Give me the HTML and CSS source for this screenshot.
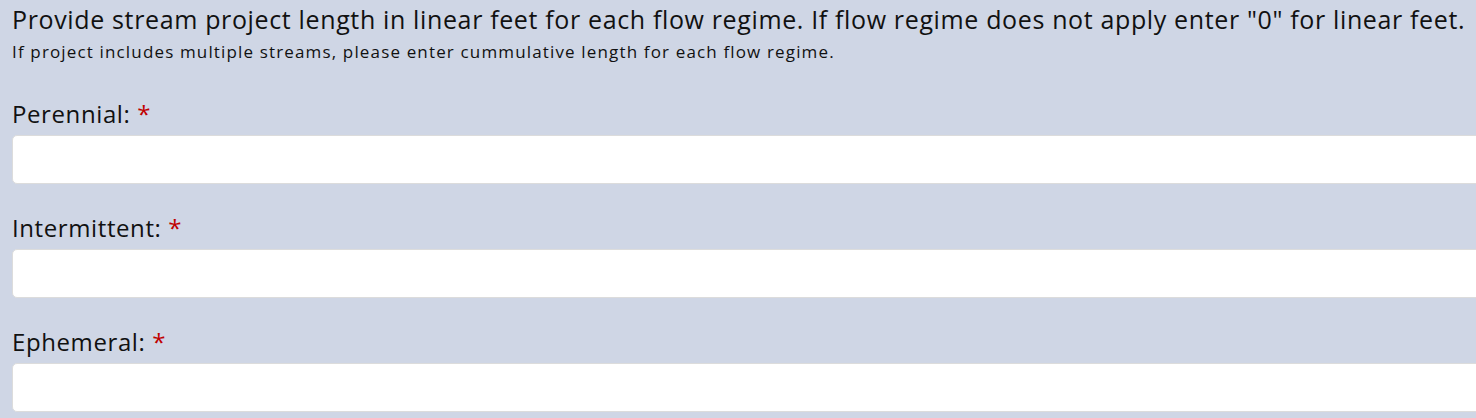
FILE: index.html
```html
<!DOCTYPE html>
<html lang="en">
<head>
    <meta charset="UTF-8">
    <title>Stream Length</title>
    <link rel="stylesheet" href="styles.css">
</head>
<body>
    <div class="section">
        <div class="intro">
            <p class="lead">Provide stream project length in linear feet for each flow regime. If flow regime does not apply enter "0" for linear feet.</p>
            <p class="note">If project includes multiple streams, please enter cummulative length for each flow regime.</p>
        </div>

        <div class="field">
            <label for="perennial">Perennial: <span class="req">*</span></label>
            <input type="text" id="perennial">
        </div>

        <div class="field">
            <label for="intermittent">Intermittent: <span class="req">*</span></label>
            <input type="text" id="intermittent">
        </div>

        <div class="field">
            <label for="ephemeral">Ephemeral: <span class="req">*</span></label>
            <input type="text" id="ephemeral">
        </div>
    </div>
</body>
</html>
```

FILE: styles.css
```css
html, body {
    margin: 0;
    padding: 0;
    background-color: #cfd6e5;
    overflow: hidden;
}
body {
    font-family: 'Open Sans', sans-serif;
    color: #111;
}
.section {
    padding: 4px 0 0 12px;
    width: 1480px;
}
.intro p {
    margin: 0;
    white-space: nowrap;
}
.lead {
    font-size: 25px;
    line-height: 30px;
    letter-spacing: 0.64px;
}
.note {
    font-size: 17px;
    line-height: 20px;
    letter-spacing: 1.15px;
    margin-top: 8px !important;
}
.field {
    margin-top: 37px;
}
.field + .field {
    margin-top: 29px;
}
.field label {
    display: block;
    font-size: 24px;
    line-height: 30px;
    letter-spacing: 0.6px;
    margin-bottom: 6px;
}
.req {
    color: #c00000;
}
.field input {
    display: block;
    box-sizing: border-box;
    width: 100%;
    height: 49px;
    background: #fff;
    border: 1px solid #dcdcdc;
    border-radius: 5px;
    font-size: 18px;
    padding: 0 12px;
    outline: none;
}
```
